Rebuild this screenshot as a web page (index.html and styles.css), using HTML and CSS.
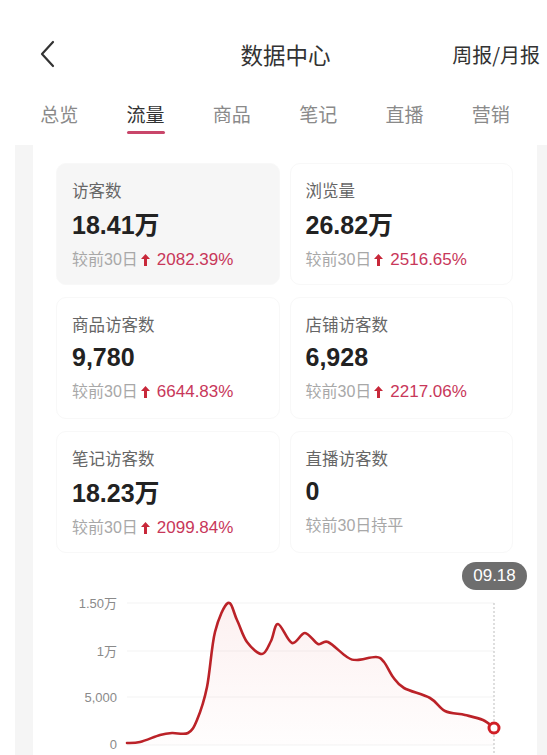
FILE: index.html
```html
<!DOCTYPE html>
<html lang="zh-CN">
<head>
  <meta charset="UTF-8">
  <link rel="stylesheet" href="styles.css">
</head>
<body>
  <div class="header">
    <span class="back">
      <svg width="16" height="28" viewBox="0 0 16 28"><path d="M13 2 L2 14 L13 26" fill="none" stroke="#333" stroke-width="2.2" stroke-linecap="round" stroke-linejoin="round"/></svg>
    </span>
    <span class="title">数据中心</span>
    <span class="report">周报/月报</span>
  </div>

  <div class="tabs">
    <span class="tab">总览</span>
    <span class="tab active">流量</span>
    <span class="tab">商品</span>
    <span class="tab">笔记</span>
    <span class="tab">直播</span>
    <span class="tab">营销</span>
  </div>

  <div class="pager">
    <div class="stub left"></div>
    <div class="card">
      <div class="grid">
        <div class="tile selected">
          <div class="label">访客数</div>
          <div class="value">18.41<span class="unit">万</span></div>
          <div class="change">较前30日<svg class="up" width="9" height="12" viewBox="0 0 9 12"><path d="M4.5 0 L9 5 L6 5 L6 12 L3 12 L3 5 L0 5 Z" fill="#c8283a"/></svg><span class="pct">2082.39%</span></div>
        </div>
        <div class="tile">
          <div class="label">浏览量</div>
          <div class="value">26.82<span class="unit">万</span></div>
          <div class="change">较前30日<svg class="up" width="9" height="12" viewBox="0 0 9 12"><path d="M4.5 0 L9 5 L6 5 L6 12 L3 12 L3 5 L0 5 Z" fill="#c8283a"/></svg><span class="pct">2516.65%</span></div>
        </div>
        <div class="tile">
          <div class="label">商品访客数</div>
          <div class="value">9,780</div>
          <div class="change">较前30日<svg class="up" width="9" height="12" viewBox="0 0 9 12"><path d="M4.5 0 L9 5 L6 5 L6 12 L3 12 L3 5 L0 5 Z" fill="#c8283a"/></svg><span class="pct">6644.83%</span></div>
        </div>
        <div class="tile">
          <div class="label">店铺访客数</div>
          <div class="value">6,928</div>
          <div class="change">较前30日<svg class="up" width="9" height="12" viewBox="0 0 9 12"><path d="M4.5 0 L9 5 L6 5 L6 12 L3 12 L3 5 L0 5 Z" fill="#c8283a"/></svg><span class="pct">2217.06%</span></div>
        </div>
        <div class="tile">
          <div class="label">笔记访客数</div>
          <div class="value">18.23<span class="unit">万</span></div>
          <div class="change">较前30日<svg class="up" width="9" height="12" viewBox="0 0 9 12"><path d="M4.5 0 L9 5 L6 5 L6 12 L3 12 L3 5 L0 5 Z" fill="#c8283a"/></svg><span class="pct">2099.84%</span></div>
        </div>
        <div class="tile">
          <div class="label">直播访客数</div>
          <div class="value">0</div>
          <div class="change">较前30日持平</div>
        </div>
      </div>

      <div class="chart">
        <span class="badge">09.18</span>
        <svg width="504" height="210" viewBox="33 553 504 210">
          <defs>
            <linearGradient id="fill" x1="0" y1="0" x2="0" y2="1">
              <stop offset="0" stop-color="#e04848" stop-opacity="0.08"/>
              <stop offset="1" stop-color="#e04848" stop-opacity="0.01"/>
            </linearGradient>
          </defs>
          <g stroke="#f3f3f3" stroke-width="1">
            <line x1="127" y1="603" x2="494" y2="603"/>
            <line x1="127" y1="651" x2="494" y2="651"/>
            <line x1="127" y1="697" x2="494" y2="697"/>
            <line x1="127" y1="745" x2="494" y2="745"/>
          </g>
          <line x1="494" y1="603" x2="494" y2="760" stroke="#bdbdbd" stroke-width="1" stroke-dasharray="2 2"/>
          <g class="axis" text-anchor="end">
            <text x="117" y="608">1.50万</text>
            <text x="117" y="656">1万</text>
            <text x="117" y="702">5,000</text>
            <text x="117" y="749">0</text>
          </g>
          <path fill="url(#fill)" d="M127,743 C129.2,742.8 134.5,743.3 140,742 C145.5,740.7 154.7,736.5 160,735 C165.3,733.5 167.3,733.3 172,733 C176.7,732.7 183.8,735.2 188,733 C192.2,730.8 193.8,727.7 197,720 C200.2,712.3 204,701.7 207,687 C210,672.3 211.5,646 215,632 C218.5,618 224.3,605 228,603 C231.7,601 233.8,613.5 237,620 C240.2,626.5 242.8,636.3 247,642 C251.2,647.7 258,654.2 262,654 C266,653.8 268.3,646 271,641 C273.7,636 274.5,623.7 278,624 C281.5,624.3 287.5,641.5 292,643 C296.5,644.5 300.7,632.8 305,633 C309.3,633.2 314.2,642.5 318,644 C321.8,645.5 323.2,639.8 328,642 C332.8,644.2 342.2,654 347,657 C351.8,660 352.2,660 357,660 C361.8,660 371.5,656.7 376,657 C380.5,657.3 381.2,658.7 384,662 C386.8,665.3 389.7,672.7 393,677 C396.3,681.3 397.8,684.5 404,688 C410.2,691.5 423.2,694.2 430,698 C436.8,701.8 439.2,708.2 445,711 C450.8,713.8 458.7,713.5 465,715 C471.3,716.5 478.2,717.8 483,720 C487.8,722.2 492.2,726.7 494,728 L494,745 L127,745 Z"/>
          <path fill="none" stroke="#bb2228" stroke-width="2.6" stroke-linecap="round" d="M127,743 C129.2,742.8 134.5,743.3 140,742 C145.5,740.7 154.7,736.5 160,735 C165.3,733.5 167.3,733.3 172,733 C176.7,732.7 183.8,735.2 188,733 C192.2,730.8 193.8,727.7 197,720 C200.2,712.3 204,701.7 207,687 C210,672.3 211.5,646 215,632 C218.5,618 224.3,605 228,603 C231.7,601 233.8,613.5 237,620 C240.2,626.5 242.8,636.3 247,642 C251.2,647.7 258,654.2 262,654 C266,653.8 268.3,646 271,641 C273.7,636 274.5,623.7 278,624 C281.5,624.3 287.5,641.5 292,643 C296.5,644.5 300.7,632.8 305,633 C309.3,633.2 314.2,642.5 318,644 C321.8,645.5 323.2,639.8 328,642 C332.8,644.2 342.2,654 347,657 C351.8,660 352.2,660 357,660 C361.8,660 371.5,656.7 376,657 C380.5,657.3 381.2,658.7 384,662 C386.8,665.3 389.7,672.7 393,677 C396.3,681.3 397.8,684.5 404,688 C410.2,691.5 423.2,694.2 430,698 C436.8,701.8 439.2,708.2 445,711 C450.8,713.8 458.7,713.5 465,715 C471.3,716.5 478.2,717.8 483,720 C487.8,722.2 492.2,726.7 494,728"/>
          <circle cx="494" cy="728" r="5" fill="#fff" stroke="#d01f26" stroke-width="3"/>
        </svg>
      </div>
    </div>
    <div class="stub right"></div>
  </div>
</body>
</html>
```

FILE: styles.css
```css
html, body {
  margin: 0;
  width: 547px;
  height: 755px;
  overflow: hidden;
  background: #fff;
  font-family: "Liberation Sans", "Noto Sans CJK SC", sans-serif;
  color: #333;
}

.header {
  display: flex;
  align-items: center;
  justify-content: space-between;
  height: 44px;
  padding: 32px 7px 0 40px;
  position: relative;
}

.back {
  display: flex;
  align-items: center;
}

.title {
  position: absolute;
  left: 24px;
  right: 0;
  top: 32px;
  line-height: 44px;
  text-align: center;
  font-size: 22.5px;
  color: #333;
  font-family: "Noto Sans CJK SC", sans-serif;
}

.report {
  font-size: 20px;
  color: #333;
  font-family: "Noto Sans CJK SC", sans-serif;
}

.tabs {
  display: grid;
  grid-template-columns: repeat(6, 1fr);
  margin: 0 13px 0 16px;
  padding-top: 20px;
  height: 49px;
}

.tab {
  justify-self: center;
  font-size: 19px;
  line-height: 36px;
  height: 36px;
  color: #8a8a8a;
  font-family: "Noto Sans CJK SC", sans-serif;
  position: relative;
}

.tab.active {
  color: #333;
}

.tab.active::after {
  content: "";
  position: absolute;
  left: 1px;
  right: 0;
  bottom: -2px;
  height: 3px;
  border-radius: 2px;
  background: #c9466a;
}

.pager {
  display: flex;
  height: 610px;
}

.stub {
  background: #f5f5f5;
}

.stub.left {
  width: 18px;
  margin-left: 15px;
}

.stub.right {
  width: 10px;
}

.card {
  flex: 1;
  background: #fff;
  padding: 18px 24px 0 23px;
}

.grid {
  display: grid;
  grid-template-columns: 1fr 1fr;
  column-gap: 10px;
  row-gap: 12px;
}

.tile {
  height: 122px;
  box-sizing: border-box;
  padding: 15px 15px 0;
  border: 1px solid #f8f8f8;
  border-radius: 10px;
}

.tile.selected {
  background: #f6f6f6;
}

.label {
  font-size: 16.5px;
  line-height: 22px;
  color: #666;
  font-family: "Noto Sans CJK SC", sans-serif;
}

.value {
  margin-top: 6px;
  font-size: 25px;
  line-height: 32px;
  font-weight: bold;
  color: #222;
}

.unit {
  font-family: "Noto Sans CJK SC", sans-serif;
  font-weight: bold;
}

.change {
  margin-top: 8px;
  display: flex;
  align-items: center;
  font-size: 16px;
  line-height: 22px;
  color: #a8a8a8;
  font-family: "Liberation Sans", "Noto Sans CJK SC", sans-serif;
}

.up {
  margin: 0 7px 0 3px;
}

.pct {
  font-size: 17px;
  color: #c8375a;
}

.chart {
  position: relative;
  margin: 0 -24px 0 -23px;
  height: 210px;
}

.chart svg {
  display: block;
}

.axis {
  font-family: "Liberation Sans", "Noto Sans CJK SC", sans-serif;
  font-size: 13px;
  fill: #8a8a8a;
}

.badge {
  position: absolute;
  top: 9px;
  right: 10px;
  width: 65px;
  height: 28px;
  line-height: 28px;
  border-radius: 14px;
  background: #6e6e6e;
  color: #fff;
  text-align: center;
  font-size: 17px;
}
```
